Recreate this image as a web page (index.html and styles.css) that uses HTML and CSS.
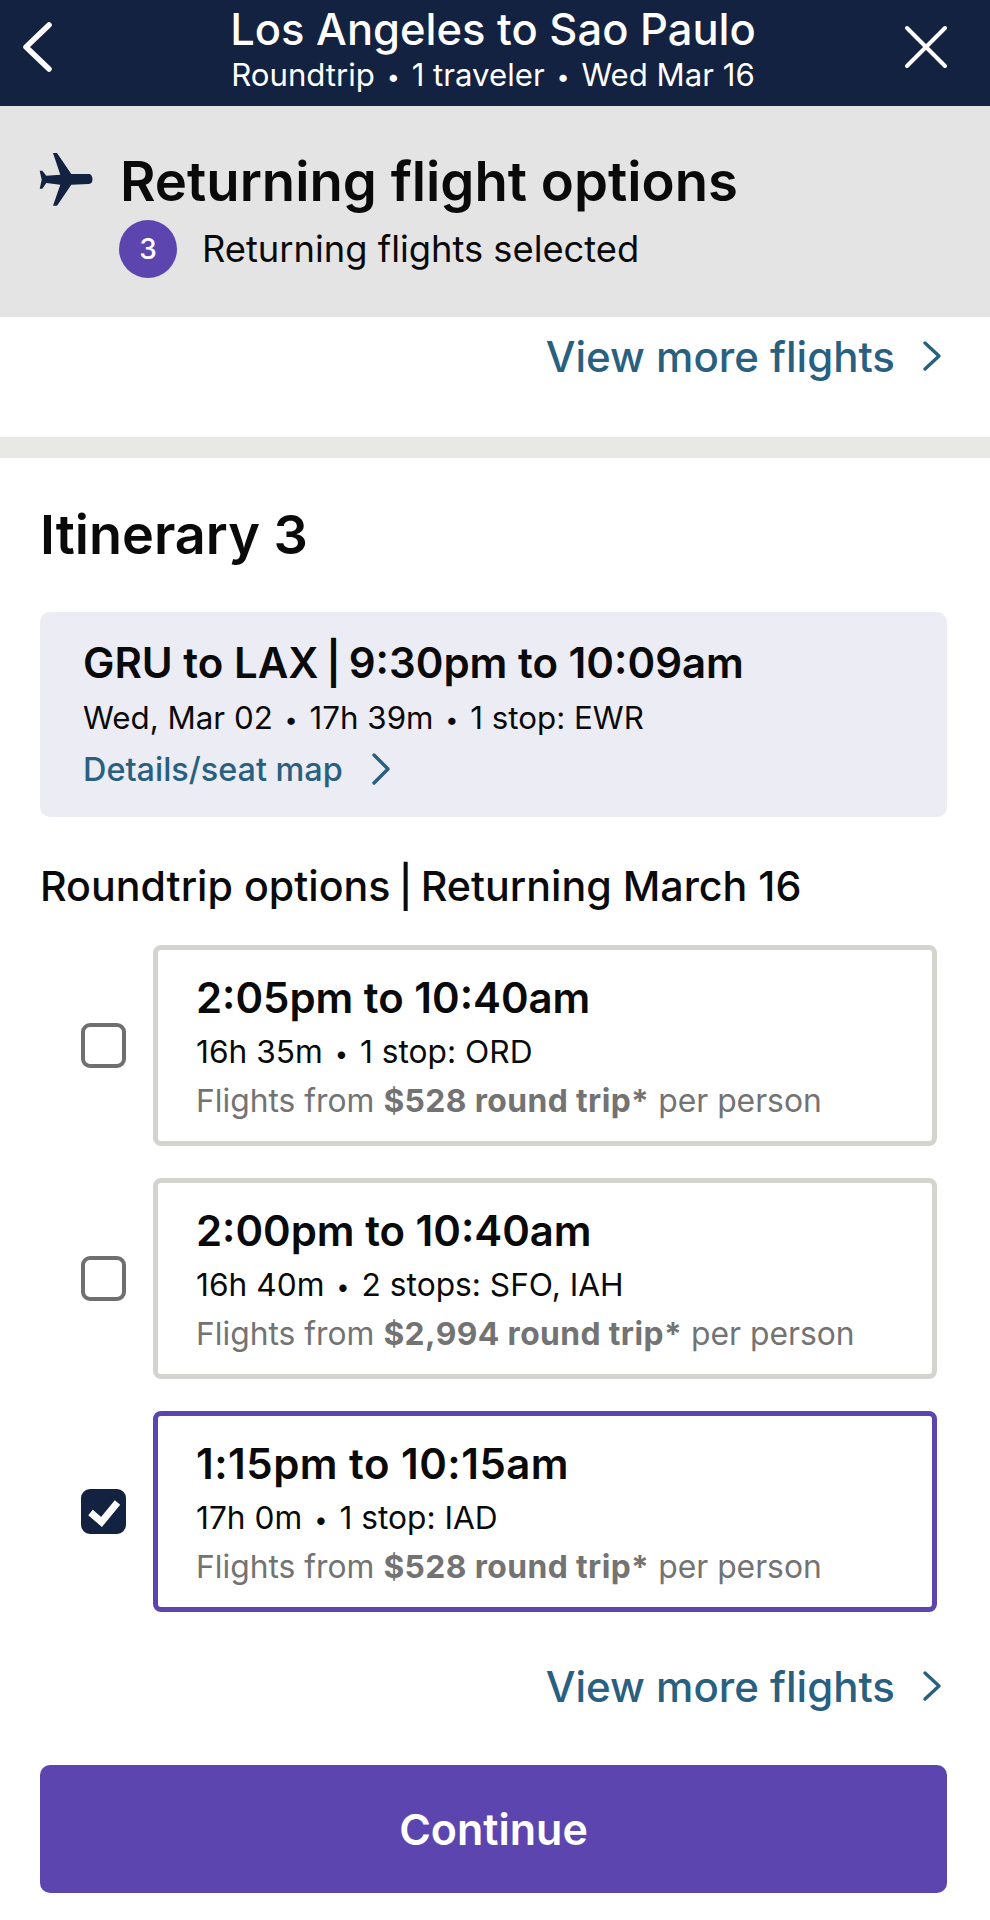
FILE: index.html
```html
<!DOCTYPE html>
<html lang="en">
<head>
<meta charset="utf-8">
<title>Returning flight options</title>
<link rel="stylesheet" href="styles.css">
</head>
<body>
<header class="topbar">
  <svg class="back" viewBox="0 0 34 54" aria-hidden="true"><path d="M29 5 6 27l23 22"/></svg>
  <div class="topbar-text">
    <div class="topbar-title">Los Angeles to Sao Paulo</div>
    <div class="topbar-sub">Roundtrip <span class="dot">•</span> 1 traveler <span class="dot">•</span> Wed Mar 16</div>
  </div>
  <svg class="close" viewBox="0 0 46 46" aria-hidden="true"><path d="M4 4l38 38M42 4 4 42"/></svg>
</header>
<section class="hero">
  <div class="hero-title-row">
    <svg class="plane" viewBox="0 0 54 54" aria-hidden="true"><path d="M14 0h4l14.3 21H50c2 0 3.5 2.500 3.500 5.300S52 31 50 31l-17.700.7L18 52.700h-4l7.300-21-14-1.700-4 5.700H.7l2-9-2-9h2.600l4 5 14 -1z"/></svg>
    <h1 class="hero-title">Returning flight options</h1>
  </div>
  <div class="hero-sub-row">
    <span class="badge">3</span>
    <span class="hero-sub">Returning flights selected</span>
  </div>
</section>
<div class="more more-top">
  <a class="more-link">View more flights</a>
  <svg class="chev-lg" viewBox="0 0 20 32" aria-hidden="true"><path d="M3 3l14 13L3 29"/></svg>
</div>
<div class="divider"></div>
<main class="content">
  <h2 class="itinerary">Itinerary 3</h2>
  <section class="summary">
    <div class="summary-title">GRU to LAX <span class="pipe">|</span> 9:30pm to 10:09am</div>
    <div class="summary-meta">Wed, Mar 02 <span class="dot">•</span> 17h 39m <span class="dot">•</span> 1 stop: EWR</div>
    <div class="summary-link">
      <a class="details">Details/seat map</a>
      <svg class="chev-sm" viewBox="0 0 20 32" aria-hidden="true"><path d="M3 2l14 14L3 30"/></svg>
    </div>
  </section>
  <h3 class="options-title">Roundtrip options <span class="pipe">|</span> Returning March 16</h3>
  <div class="options">
    <div class="option">
      <span class="check"></span>
      <div class="card">
        <div class="card-time">2:05pm to 10:40am</div>
        <div class="card-meta">16h 35m <span class="dot">•</span> 1 stop: ORD</div>
        <div class="card-price">Flights from <b>$528 round trip*</b> per person</div>
      </div>
    </div>
    <div class="option">
      <span class="check"></span>
      <div class="card">
        <div class="card-time">2:00pm to 10:40am</div>
        <div class="card-meta">16h 40m <span class="dot">•</span> 2 stops: SFO, IAH</div>
        <div class="card-price">Flights from <b>$2,994 round trip*</b> per person</div>
      </div>
    </div>
    <div class="option">
      <span class="check check-on">
        <svg viewBox="0 0 45 45" aria-hidden="true"><path d="M9.500 23.500 20.500 33 36.500 13.500"/></svg>
      </span>
      <div class="card card-on">
        <div class="card-time">1:15pm to 10:15am</div>
        <div class="card-meta">17h 0m <span class="dot">•</span> 1 stop: IAD</div>
        <div class="card-price">Flights from <b>$528 round trip*</b> per person</div>
      </div>
    </div>
  </div>
  <div class="more more-bottom">
    <a class="more-link">View more flights</a>
    <svg class="chev-lg" viewBox="0 0 20 32" aria-hidden="true"><path d="M3 3l14 13L3 29"/></svg>
  </div>
  <button class="continue">Continue</button>
</main>
</body>
</html>
```
FILE: styles.css
```css
* { box-sizing: border-box; }
html, body { margin: 0; padding: 0; background: #fff; }
body { width: 990px; height: 1920px; overflow: hidden; font-family: Inter, "Liberation Sans", sans-serif; color: #0a0a0a; }
h1, h2, h3 { margin: 0; }

.topbar { height: 106px; background: #132240; color: #fff; display: grid; grid-template-columns: 1fr auto 1fr; align-items: center; padding-right: 4px; }
.back { width: 34px; height: 54px; margin: 0 0 12px 20px; justify-self: start; }
.back path { fill: none; stroke: #fff; stroke-width: 5.500; stroke-linecap: round; stroke-linejoin: round; }
.close { width: 46px; height: 46px; margin: 0 37px 13px 0; justify-self: end; }
.close path { fill: none; stroke: #fff; stroke-width: 4; stroke-linecap: round; }
.topbar-text { text-align: center; align-self: start; padding-top: 6px; }
.topbar-title { font-size: 43.500px; font-weight: 500; line-height: 46px; white-space: nowrap; }
.topbar-sub { font-size: 31.200px; line-height: 36px; margin-top: 5px; white-space: nowrap; }
.dot { font-size: .75em; margin: 0 3px; vertical-align: 1px; }
.pipe { margin: 0 -3px; }

.hero { height: 211px; background: #e4e4e4; padding: 44px 0 0 39px; }
.hero-title-row { display: flex; align-items: center; gap: 27px; height: 62px; }
.plane { width: 54px; height: 54px; fill: #132240; flex: none; margin-top: -2px; }
.hero-title { font-size: 54.500px; font-weight: 600; line-height: 62px; white-space: nowrap; }
.hero-sub-row { display: flex; align-items: center; margin: 8px 0 0 80px; gap: 25px; }
.badge { width: 58px; height: 58px; border-radius: 50%; background: #5d45b0; color: #fff; display: flex; align-items: center; justify-content: center; font-size: 28px; font-weight: 500; }
.hero-sub { font-size: 36.300px; }

.more { display: flex; align-items: center; justify-content: flex-end; gap: 27px; }
.more-link { font-size: 42px; font-weight: 500; color: #29607f; }
.chev-lg { width: 20px; height: 32px; flex: none; }
.chev-lg path, .chev-sm path { fill: none; stroke: #29607f; stroke-width: 3.400; stroke-linecap: round; stroke-linejoin: round; }
.more-top { height: 78px; padding-right: 48px; }
.divider { height: 21px; margin-top: 42px; background: #e8e8e6; }

.content { padding: 0 43px 0 40px; }
.itinerary { font-size: 54px; font-weight: 600; line-height: 68px; margin-top: 43px; }
.summary { height: 205px; margin-top: 43px; background: #ebecf4; border-radius: 10px; padding: 26px 43px 0; }
.summary-title { font-size: 42px; font-weight: 600; line-height: 50px; white-space: nowrap; }
.summary-meta { font-size: 31.300px; line-height: 38px; margin-top: 11px; }
.summary-link { display: flex; align-items: center; gap: 28px; margin-top: 10px; height: 40px; }
.details { font-size: 32.400px; font-weight: 500; color: #29607f; }
.chev-sm { width: 20px; height: 32px; flex: none; }
.options-title { font-size: 41.200px; font-weight: 500; line-height: 50px; margin-top: 44px; white-space: nowrap; }

.options { display: flex; flex-direction: column; gap: 32px; margin-top: 34px; }
.option { display: flex; align-items: center; }
.check { width: 45px; height: 45px; margin: 0 27px 0 41px; border: 4px solid #6f6f6f; border-radius: 9px; background: #fff; flex: none; }
.check-on { background: #132240; border-color: #132240; display: flex; align-items: center; justify-content: center; }
.check-on svg { width: 45px; height: 45px; flex: none; }
.check-on path { fill: none; stroke: #fff; stroke-width: 7; }
.card { width: 784px; height: 201px; border: 5px solid #d4d4ce; border-radius: 8px; padding: 23px 0 0 38px; background: #fff; }
.card-on { border-color: #5d45b0; }
.card-time { font-size: 41.900px; font-weight: 600; line-height: 50px; white-space: nowrap; }
.card-on .card-time { letter-spacing: .5px; }
.card-meta { font-size: 31.700px; line-height: 38px; margin-top: 10px; white-space: nowrap; }
.card-price { font-size: 31.800px; line-height: 38px; margin-top: 9px; color: #737373; white-space: nowrap; }
.card-price b { font-weight: 700; letter-spacing: .4px; }

.more-bottom { height: 78px; margin-top: 35px; padding-right: 5px; }
.continue { display: block; width: 907px; height: 128px; margin-top: 40px; border: 0; border-radius: 10px; background: #5d45b0; color: #fff; font-family: inherit; font-size: 43px; font-weight: 600; }
```
